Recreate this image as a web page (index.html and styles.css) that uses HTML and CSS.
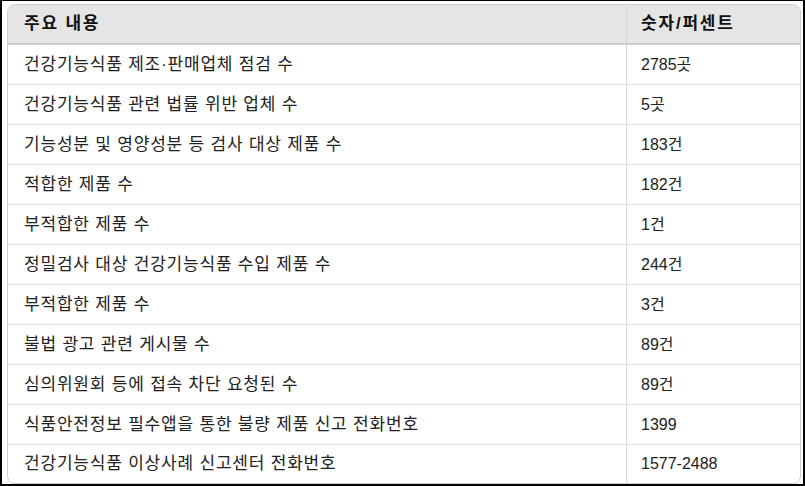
FILE: index.html
```html
<!DOCTYPE html>
<html lang="ko">
<head>
<meta charset="utf-8">
<link rel="stylesheet" href="styles.css">
</head>
<body>
<div class="frame">
  <div class="card">
    <table class="data">
      <thead>
        <tr><th class="c1">주요 내용</th><th class="c2">숫자/퍼센트</th></tr>
      </thead>
      <tbody>
        <tr><td>건강기능식품 제조·판매업체 점검 수</td><td class="num">2785곳</td></tr>
        <tr><td>건강기능식품 관련 법률 위반 업체 수</td><td class="num">5곳</td></tr>
        <tr><td>기능성분 및 영양성분 등 검사 대상 제품 수</td><td class="num">183건</td></tr>
        <tr><td>적합한 제품 수</td><td class="num">182건</td></tr>
        <tr><td>부적합한 제품 수</td><td class="num">1건</td></tr>
        <tr><td>정밀검사 대상 건강기능식품 수입 제품 수</td><td class="num">244건</td></tr>
        <tr><td>부적합한 제품 수</td><td class="num">3건</td></tr>
        <tr><td>불법 광고 관련 게시물 수</td><td class="num">89건</td></tr>
        <tr><td>심의위원회 등에 접속 차단 요청된 수</td><td class="num">89건</td></tr>
        <tr><td>식품안전정보 필수앱을 통한 불량 제품 신고 전화번호</td><td class="num">1399</td></tr>
        <tr><td>건강기능식품 이상사례 신고센터 전화번호</td><td class="num">1577-2488</td></tr>
      </tbody>
    </table>
  </div>
</div>
</body>
</html>
```

FILE: styles.css
```css
html, body {
  margin: 0;
  padding: 0;
  background: #fff;
}
.frame {
  box-sizing: border-box;
  width: 805px;
  height: 486px;
  border: 2px solid #000;
  border-top-width: 1px;
  padding: 3px 2px 2px 5px;
  font-family: "Liberation Sans", "Noto Sans CJK KR", sans-serif;
  font-size: 17px;
  color: #222;
}
.card {
  border: 1px solid #cfcfcf;
  border-radius: 8px;
  overflow: hidden;
}
.data {
  width: 100%;
  border-collapse: collapse;
  table-layout: fixed;
}
.data th, .data td {
  text-align: left;
  padding: 0 16px;
  height: 39px;
  line-height: 20px;
  letter-spacing: 0.8px;
  border-bottom: 1px solid #dcdcdc;
  vertical-align: middle;
  white-space: nowrap;
}
.data th {
  background: #e5e5e5;
  font-weight: bold;
  color: #111;
  letter-spacing: 1.8px;
  border-bottom: 2px solid #cccccc;
  height: 38px;
}
.data tbody tr:last-child td {
  border-bottom: none;
  height: 38px;
}
.data .c2 { width: 143px; }
.data th + th, .data td + td {
  border-left: 1px solid #d6d6d6;
  padding-left: 14px;
}
.data td.num {
  font-size: 16px;
  letter-spacing: 0;
}
```
